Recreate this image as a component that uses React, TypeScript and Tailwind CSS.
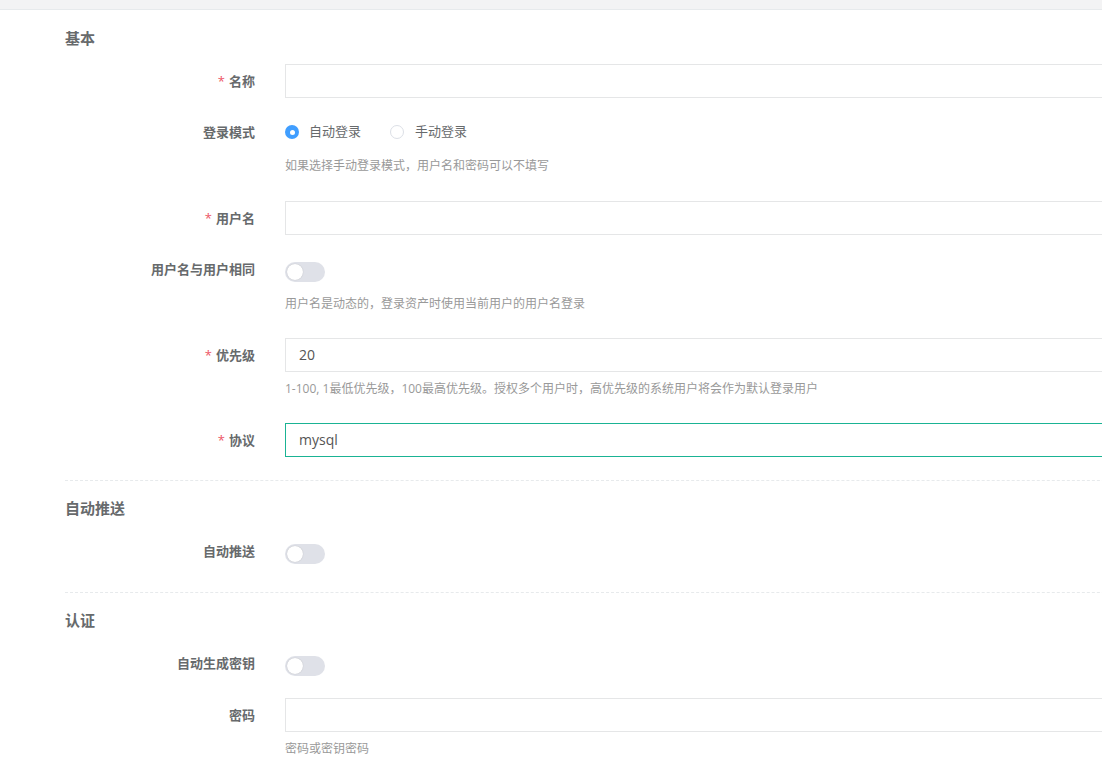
import React from "react";

const font = { fontFamily: '"Open Sans","Noto Sans CJK SC",sans-serif' };

function Label({ text, required }: { text: string; required?: boolean }) {
  return (
    <div className="w-[190px] shrink-0 pt-[7px] text-right text-[13px] font-bold leading-[20px] text-[#676a6c]">
      {required && <span className="mr-[4px] font-normal text-[#ed5565]">*</span>}
      {text}
    </div>
  );
}

function Help({ text, tight }: { text: string; tight?: boolean }) {
  return (
    <div className={"mt-[8px] text-[12px] leading-[17px] text-[#999] " + (tight ? "mb-[9px]" : "mb-[10px]")}>
      {text}
    </div>
  );
}

function Input({ value, focus }: { value?: string; focus?: boolean }) {
  return (
    <div
      className={
        "h-[34px] w-full border px-[13px] text-[14px] leading-[32px] text-[#555] " +
        (focus ? "border-[#1ab394]" : "border-[#e5e6e7]")
      }
    >
      {value}
    </div>
  );
}

function Toggle() {
  return (
    <div className="pt-[10px] pb-[5px]">
      <div className="relative h-[20px] w-[40px] rounded-full bg-[#dfe1e8]">
        <div className="absolute left-[2px] top-[2px] h-[16px] w-[16px] rounded-full bg-white shadow-[0_0_1px_rgba(0,0,0,0.25)]" />
      </div>
    </div>
  );
}

function Row({ children, label, required }: { children: React.ReactNode; label: string; required?: boolean }) {
  return (
    <div className="mb-[17px] flex">
      <Label text={label} required={required} />
      <div className="ml-[30px] flex-1">{children}</div>
    </div>
  );
}

function Title({ text }: { text: string }) {
  return <div className="mb-[16px] text-[15px] font-bold leading-[20px] text-[#676a6c]">{text}</div>;
}

function Divider() {
  return <div className="mt-[6px] mb-[17px] border-t border-dashed border-[#e7eaec]" />;
}

export default function App() {
  return (
    <div className="h-[775px] w-[1102px] overflow-hidden bg-white" style={font}>
      <div className="h-[10px] border-b border-[#e7eaec] bg-[#f3f3f4]" />
      <div className="flex w-[1160px] flex-col pl-[65px] pt-[18px]">
        <Title text="基本" />
        <Row label="名称" required>
          <Input />
        </Row>
        <Row label="登录模式">
          <div className="flex h-[34px] items-center text-[13px] text-[#676a6c]">
            <span className="flex h-[14px] w-[14px] items-center justify-center rounded-full bg-[#409eff]">
              <span className="h-[5px] w-[5px] rounded-full bg-white" />
            </span>
            <span className="ml-[10px]">自动登录</span>
            <span className="ml-[29px] h-[14px] w-[14px] rounded-full border border-[#dcdfe6] bg-white" />
            <span className="ml-[11px]">手动登录</span>
          </div>
          <Help text="如果选择手动登录模式，用户名和密码可以不填写" />
        </Row>
        <Row label="用户名" required>
          <Input />
        </Row>
        <Row label="用户名与用户相同">
          <Toggle />
          <Help text="用户名是动态的，登录资产时使用当前用户的用户名登录" tight />
        </Row>
        <Row label="优先级" required>
          <Input value="20" />
          <Help text="1-100, 1最低优先级，100最高优先级。授权多个用户时，高优先级的系统用户将会作为默认登录用户" tight />
        </Row>
        <Row label="协议" required>
          <Input value="mysql" focus />
        </Row>
        <Divider />
        <Title text="自动推送" />
        <Row label="自动推送">
          <Toggle />
        </Row>
        <Divider />
        <Title text="认证" />
        <Row label="自动生成密钥">
          <Toggle />
        </Row>
        <Row label="密码">
          <Input />
          <Help text="密码或密钥密码" />
        </Row>
      </div>
    </div>
  );
}
